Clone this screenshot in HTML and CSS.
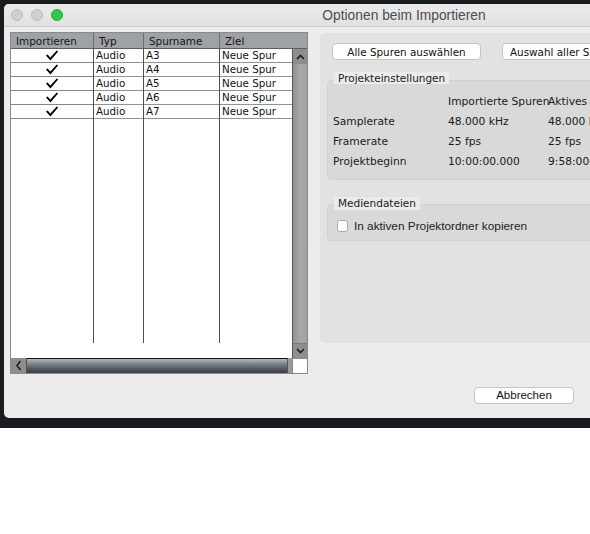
FILE: index.html
```html
<!DOCTYPE html>
<html lang="de">
<head>
<meta charset="utf-8">
<title>Optionen beim Importieren</title>
<link rel="stylesheet" href="styles.css">
</head>
<body>
<div class="desk">
  <div class="window">
    <div class="titlebar">
      <div class="lights"><span class="light gray"></span><span class="light gray"></span><span class="light green"></span></div>
      <div class="title">Optionen beim Importieren</div>
      <div></div>
    </div>
    <div class="content">
      <div class="main">
        <div class="tracks">
          <div class="thead">
            <div class="th c1">Importieren</div>
            <div class="th c2">Typ</div>
            <div class="th c3">Spurname</div>
            <div class="th c45">Ziel</div>
          </div>
          <div class="tbody">
            <div class="grid">
              <div class="cols">
                <div class="col c1">
                  <div class="cell"><svg class="tick" width="14" height="11" viewBox="0 0 14 11"><path d="M1 5.6 L2.6 4.4 L5.3 7.6 L11.8 0.5 L13.1 1.5 L5.4 10.6 Z"/></svg></div>
                  <div class="cell"><svg class="tick" width="14" height="11" viewBox="0 0 14 11"><path d="M1 5.6 L2.6 4.4 L5.3 7.6 L11.8 0.5 L13.1 1.5 L5.4 10.6 Z"/></svg></div>
                  <div class="cell"><svg class="tick" width="14" height="11" viewBox="0 0 14 11"><path d="M1 5.6 L2.6 4.4 L5.3 7.6 L11.8 0.5 L13.1 1.5 L5.4 10.6 Z"/></svg></div>
                  <div class="cell"><svg class="tick" width="14" height="11" viewBox="0 0 14 11"><path d="M1 5.6 L2.6 4.4 L5.3 7.6 L11.8 0.5 L13.1 1.5 L5.4 10.6 Z"/></svg></div>
                  <div class="cell"><svg class="tick" width="14" height="11" viewBox="0 0 14 11"><path d="M1 5.6 L2.6 4.4 L5.3 7.6 L11.8 0.5 L13.1 1.5 L5.4 10.6 Z"/></svg></div>
                </div>
                <div class="col c2">
                  <div class="cell">Audio</div>
                  <div class="cell">Audio</div>
                  <div class="cell">Audio</div>
                  <div class="cell">Audio</div>
                  <div class="cell">Audio</div>
                </div>
                <div class="col c3">
                  <div class="cell">A3</div>
                  <div class="cell">A4</div>
                  <div class="cell">A5</div>
                  <div class="cell">A6</div>
                  <div class="cell">A7</div>
                </div>
                <div class="col c4">
                  <div class="cell">Neue Spur</div>
                  <div class="cell">Neue Spur</div>
                  <div class="cell">Neue Spur</div>
                  <div class="cell">Neue Spur</div>
                  <div class="cell">Neue Spur</div>
                </div>
              </div>
              <div class="blank"></div>
            </div>
            <div class="vscroll">
              <div class="vbtn up"><svg width="9" height="6" viewBox="0 0 9 6"><polyline points="1,5 4.5,1.5 8,5" fill="none" stroke="#1e1e1e" stroke-width="1.6"/></svg></div>
              <div class="vtrack"></div>
              <div class="vbtn down"><svg width="9" height="6" viewBox="0 0 9 6"><polyline points="1,1 4.5,4.5 8,1" fill="none" stroke="#1e1e1e" stroke-width="1.6"/></svg></div>
            </div>
          </div>
          <div class="hscroll">
            <div class="hbtn"><svg width="7" height="11" viewBox="0 0 7 11"><polyline points="5.5,1 2,5.5 5.5,10" fill="none" stroke="#1e1e1e" stroke-width="1.6"/></svg></div>
            <div class="hthumb"></div>
            <div class="hrest"></div>
            <div class="corner"></div>
          </div>
        </div>

        <div class="panel">
          <div class="btnrow">
            <button class="btn wide">Alle Spuren auswählen</button>
            <button class="btn">Auswahl aller Spuren aufheben</button>
          </div>

          <div class="group">
            <div class="group-head"><span class="group-label">Projekteinstellungen</span></div>
            <div class="group-box settings">
              <div class="info">
                <span></span><span>Importierte Spuren</span><span>Aktives Projekt</span>
                <span>Samplerate</span><span>48.000 kHz</span><span>48.000 kHz</span>
                <span>Framerate</span><span>25 fps</span><span>25 fps</span>
                <span>Projektbeginn</span><span>10:00:00.000</span><span>9:58:00.000</span>
              </div>
            </div>
          </div>

          <div class="group media">
            <div class="group-head"><span class="group-label">Mediendateien</span></div>
            <div class="group-box media-box">
              <label class="check"><span class="box"></span><span class="check-text">In aktiven Projektordner kopieren</span></label>
            </div>
          </div>
        </div>
      </div>
      <div class="footer">
        <button class="btn cancel">Abbrechen</button>
      </div>
    </div>
  </div>
</div>
</body>
</html>
```

FILE: styles.css
```css
html, body {
  margin: 0;
  background: #ffffff;
}

.desk {
  height: 428px;
  overflow: hidden;
  box-sizing: border-box;
  padding: 4px 0 0 4px;
  background: #1a1b1e;
}

.window {
  width: 800px;
  height: 414px;
  background: #ececec;
  border-radius: 5px;
  overflow: hidden;
  font-family: "DejaVu Sans", sans-serif;
  color: #1a1a1a;
}

/* title bar */
.titlebar {
  height: 23px;
  box-sizing: border-box;
  border-bottom: 1px solid #cfcfcf;
  background: linear-gradient(#ebebeb, #e1e1e1);
  display: grid;
  grid-template-columns: 1fr auto 1fr;
  align-items: center;
}

.lights {
  display: flex;
  gap: 8px;
  padding-left: 7px;
}

.light {
  width: 12px;
  height: 12px;
  border-radius: 50%;
  box-sizing: border-box;
}

.light.gray {
  background: #d0d0d0;
  border: 1px solid #bababa;
}

.light.green {
  background: #35c64a;
  border: 1px solid #29a83b;
}

.title {
  font-family: "Liberation Sans", Arial, sans-serif;
  font-size: 13.8px;
  color: #4d4d4d;
  white-space: nowrap;
}

/* content */
.content {
  padding: 5px 0 0 6px;
}

.main {
  display: flex;
  align-items: flex-start;
}

/* track table */
.tracks {
  width: 298px;
  height: 342px;
  box-sizing: border-box;
  border: 1px solid #8a8a8a;
  background: #ffffff;
  display: flex;
  flex-direction: column;
}

.thead {
  display: flex;
  height: 16px;
  box-sizing: border-box;
  border-bottom: 1px solid #5e5e5e;
  background: #9ea1a5;
}

.th {
  box-sizing: border-box;
  font-size: 10.4px;
  line-height: 14px;
  padding: 1px 0 0 5px;
  color: #151515;
  white-space: nowrap;
  overflow: hidden;
}

.th.c1, .th.c2, .th.c3 {
  border-right: 1px solid #6c6c6c;
}

.c1 { width: 83px; }
.c2 { width: 50px; }
.c3 { width: 76px; }
.c4 { width: 72px; }
.c45 { width: 87px; }

.tbody {
  display: flex;
  height: 309px;
}

.grid {
  width: 281px;
  display: flex;
  flex-direction: column;
}

.cols {
  display: flex;
  height: 294px;
}

.col {
  box-sizing: border-box;
  height: 100%;
}

.col.c1, .col.c2, .col.c3 {
  border-right: 1px solid #505050;
}

.cell {
  height: 14px;
  box-sizing: border-box;
  border-bottom: 1px solid #939393;
  font-size: 10.3px;
  line-height: 13px;
  padding-left: 2px;
  white-space: nowrap;
  color: #111118;
}

.col.c1 .cell {
  display: flex;
  justify-content: center;
  align-items: center;
  padding: 0;
  border-bottom-color: #858585;
}

.tick path {
  fill: #000;
}

.blank {
  height: 15px;
}

.vscroll {
  width: 15px;
  box-sizing: border-box;
  border-left: 1px solid #555555;
  display: flex;
  flex-direction: column;
  background: linear-gradient(90deg, #929292, #a8a8a8 55%, #a2a2a2);
}

.vbtn {
  display: flex;
  align-items: center;
  justify-content: center;
  background: #8e8e8e;
}

.vbtn.up {
  height: 15px;
}

.vbtn.down {
  height: 15px;
  box-sizing: border-box;
  border-top: 1px solid #7a7a7a;
}

.vtrack {
  flex: 1;
}

.hscroll {
  display: flex;
  height: 15px;
}

.hbtn {
  width: 16px;
  box-sizing: border-box;
  border-right: 1px solid #4e4e4e;
  background: #8e8e8e;
  display: flex;
  align-items: center;
  justify-content: center;
}

.hthumb {
  flex: 1;
  box-sizing: border-box;
  border-top: 1px solid #111111;
  background: linear-gradient(#b4b8bc, #7e838a 35%, #4f545a 75%, #3b3f45);
}

.hrest {
  width: 5px;
  box-sizing: border-box;
  border-left: 1px solid #555555;
  background: #9a9a9a;
}

.corner {
  width: 15px;
  box-sizing: border-box;
  border-left: 1px solid #8a8a8a;
  border-top: 1px solid #8a8a8a;
  background: #ffffff;
}

/* right panel */
.panel {
  margin: 1px 0 0 12px;
  width: 460px;
  height: 310px;
  box-sizing: border-box;
  padding: 10px 0 0 7px;
  background: #e2e2e2;
  border-radius: 5px;
  font-size: 10.7px;
  color: #1a1a1a;
}

.btnrow {
  display: flex;
  gap: 21px;
  padding-left: 5px;
}

.btn {
  margin: 0;
  height: 17px;
  box-sizing: border-box;
  background: #ffffff;
  border: 1px solid #c4c4c4;
  border-radius: 4px;
  font-family: "DejaVu Sans", sans-serif;
  font-size: 10.4px;
  line-height: 14px;
  color: #111111;
  padding: 0 7px;
  white-space: nowrap;
  text-align: center;
}

.btn.wide {
  width: 149px;
  padding: 0;
}

.group {
  margin-top: 12px;
}

.group-head {
  display: flex;
}

.group-label {
  margin-left: 7px;
  padding: 0 4px;
  height: 12px;
  line-height: 12px;
  font-size: 10.5px;
  background: #ebebeb;
  white-space: nowrap;
}

.group-box {
  box-sizing: border-box;
  border: 1px solid #d1d1d1;
  background: #d9d9d9;
  border-radius: 4px;
}

.settings {
  margin-top: -4px;
  height: 100px;
  padding: 10px 0 0 5px;
}

.info {
  display: grid;
  grid-template-columns: 115px 100px auto;
  grid-auto-rows: 20px;
  align-items: center;
  white-space: nowrap;
}

.group.media {
  margin-top: 17px;
}

.group.media .group-label {
  height: 13px;
  line-height: 13px;
}

.media-box {
  margin-top: -6px;
  height: 37px;
  padding: 15px 0 0 9px;
}

.check {
  display: flex;
  align-items: center;
  gap: 6px;
  height: 12px;
}

.box {
  width: 11px;
  height: 12px;
  box-sizing: border-box;
  border: 1px solid #a9a9a9;
  background: #ffffff;
  border-radius: 2.5px;
}

.check-text {
  font-family: "Liberation Sans", Arial, sans-serif;
  font-size: 11.8px;
  line-height: 12px;
  color: #222222;
  white-space: nowrap;
}

/* footer */
.footer {
  display: flex;
  padding: 13px 0 0 464px;
}

.btn.cancel {
  width: 100px;
  padding: 0;
  font-family: "Liberation Sans", Arial, sans-serif;
  font-size: 11.5px;
  line-height: 15px;
}
```
